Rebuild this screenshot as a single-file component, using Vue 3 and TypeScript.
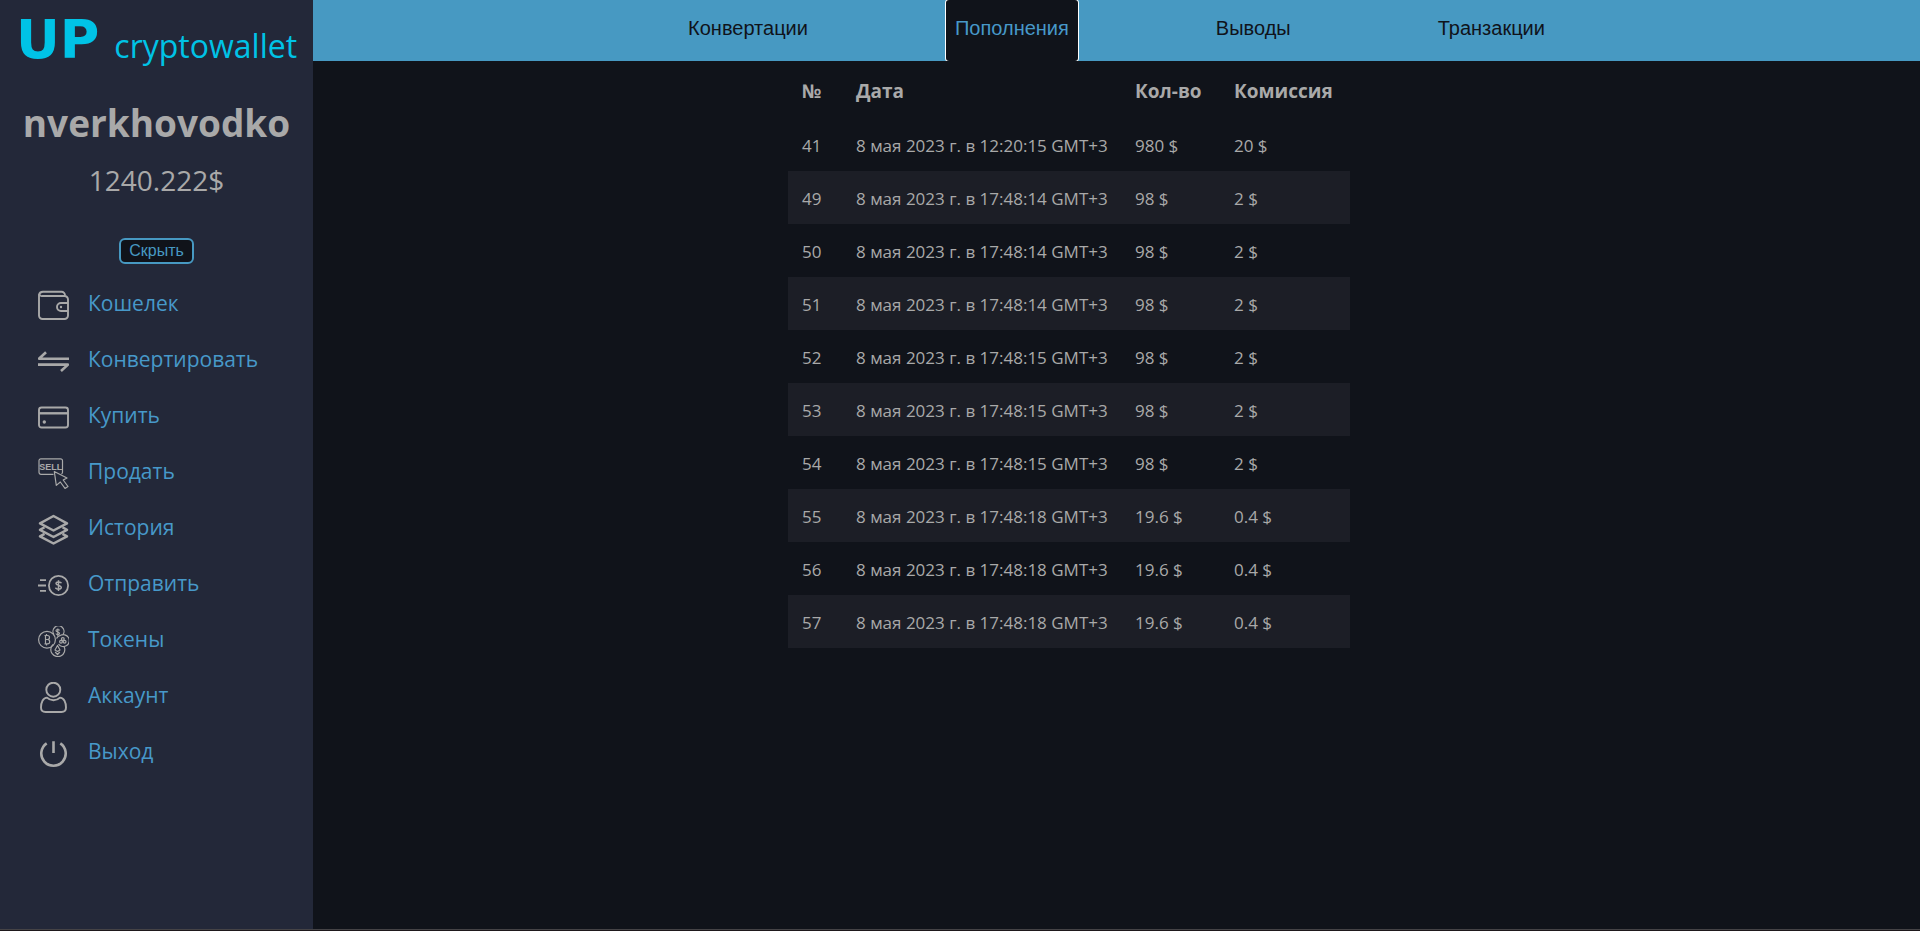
<script setup lang="ts">
import { ref } from 'vue'

interface Deposit {
  id: number
  date: string
  amount: string
  fee: string
}

const username = 'nverkhovodko'
const balance = '1240.222$'
const collapsed = ref(false)

const menu = [
  { icon: 'wallet', label: 'Кошелек' },
  { icon: 'convert', label: 'Конвертировать' },
  { icon: 'card', label: 'Купить' },
  { icon: 'sell', label: 'Продать' },
  { icon: 'layers', label: 'История' },
  { icon: 'send', label: 'Отправить' },
  { icon: 'tokens', label: 'Токены' },
  { icon: 'user', label: 'Аккаунт' },
  { icon: 'power', label: 'Выход' },
]

const tabs = ['Конвертации', 'Пополнения', 'Выводы', 'Транзакции']
const activeTab = ref('Пополнения')

const deposits: Deposit[] = [
  { id: 41, date: '8 мая 2023 г. в 12:20:15 GMT+3', amount: '980 $', fee: '20 $' },
  { id: 49, date: '8 мая 2023 г. в 17:48:14 GMT+3', amount: '98 $', fee: '2 $' },
  { id: 50, date: '8 мая 2023 г. в 17:48:14 GMT+3', amount: '98 $', fee: '2 $' },
  { id: 51, date: '8 мая 2023 г. в 17:48:14 GMT+3', amount: '98 $', fee: '2 $' },
  { id: 52, date: '8 мая 2023 г. в 17:48:15 GMT+3', amount: '98 $', fee: '2 $' },
  { id: 53, date: '8 мая 2023 г. в 17:48:15 GMT+3', amount: '98 $', fee: '2 $' },
  { id: 54, date: '8 мая 2023 г. в 17:48:15 GMT+3', amount: '98 $', fee: '2 $' },
  { id: 55, date: '8 мая 2023 г. в 17:48:18 GMT+3', amount: '19.6 $', fee: '0.4 $' },
  { id: 56, date: '8 мая 2023 г. в 17:48:18 GMT+3', amount: '19.6 $', fee: '0.4 $' },
  { id: 57, date: '8 мая 2023 г. в 17:48:18 GMT+3', amount: '19.6 $', fee: '0.4 $' },
]
</script>

<template>
  <div class="page">
    <aside class="sidebar">
      <a class="logo" href="#"><span class="logo-up">UP</span><span class="logo-name">cryptowallet</span></a>
      <h1 class="username">{{ username }}</h1>
      <p class="balance">{{ balance }}</p>
      <button class="toggle" type="button" @click="collapsed = !collapsed">Скрыть</button>

      <nav v-show="!collapsed" class="menu">
        <a v-for="item in menu" :key="item.icon" class="menu-link" href="#">
          <svg class="icon" viewBox="0 0 31 31" aria-hidden="true">
            <g v-if="item.icon === 'wallet'" stroke-width="1.9">
              <path d="M1 5.2A4 4 0 0 1 5 1.8H23.500a3.500 3.500 0 0 1 3.500 3.600" />
              <path d="M1 5v20.500A3.500 3.500 0 0 0 4.500 29H26.500A3.500 3.500 0 0 0 30 25.500V9.500A3.500 3.500 0 0 0 26.500 6H4.500A3 3 0 0 1 1 4" />
              <path d="M30 13H23a4 4 0 0 0 0 8h7" />
              <circle class="solid" cx="23" cy="17" r="1.200" />
            </g>
            <g v-else-if="item.icon === 'convert'" stroke-width="2.6">
              <path d="M8 6.200 1 12.700H31M23 25 30 18.600H0" />
            </g>
            <g v-else-if="item.icon === 'card'">
              <rect x="1" y="5.500" width="29" height="20" rx="2.500" stroke-width="1.9" />
              <path d="M1 11.300H30" stroke-width="2.400" />
              <circle class="solid" cx="6.300" cy="20" r="1.700" />
            </g>
            <g v-else-if="item.icon === 'sell'" stroke-width="1.2">
              <path d="M15.500 16.300H3A2 2 0 0 1 1 14.300V3A2 2 0 0 1 3 .8H22.500A2 2 0 0 1 24.500 3V14.300A2 2 0 0 1 23.500 16" />
              <text class="icon-text" x="12.700" y="11.800">SELL</text>
              <path d="M16.300 13.500 29 20 25.200 22 30 28.500 27 30.400 22.300 24 18.300 27.400Z" />
            </g>
            <g v-else-if="item.icon === 'layers'" stroke-width="2.5">
              <path d="M15.500 2 29 9.300 15.500 16.500 2 9.300Z" />
              <path d="M24.500 13.200 29 15.900 15.500 23 2 15.900 6.500 13.200" />
              <path d="M24.500 19.800 29 22.400 15.500 29.500 2 22.400 6.500 19.800" />
            </g>
            <g v-else-if="item.icon === 'send'" stroke-width="1.8">
              <circle cx="20.500" cy="15.500" r="9.600" />
              <path d="M2 10.200H8M0 15.500H8M2 20.800H8" />
              <path d="M23.400 13.200C23 11.600 18 11.200 18 13.600 18 15.800 23.300 15 23.300 17.500 23.300 19.800 18 19.600 17.600 17.600M20.500 10.200V21" stroke-width="1.500" />
            </g>
            <g v-else-if="item.icon === 'tokens'" stroke-width="1.2">
              <circle cx="9" cy="13.700" r="8.400" />
              <path d="M16 8.500A5.500 5.500 0 1 1 25 8.500M20.500 18.200A6 6 0 1 0 22.500 9.300 5.500 5.500 0 0 0 18.500 12.500" />
              <path d="M15 18.500A7 7 0 1 0 26.300 21" />
              <path d="M6.500 9.500H9.500a2 2 0 0 1 0 4H7.500M9.500 13.500a2.200 2.200 0 0 1 0 4.400H6.500M7.500 9.500V18M8.500 8V9.500M8.500 18V19.500" />
              <path d="M21.500 4.500C21 3 18 3.200 18 4.800 18 6.300 21.500 5.800 21.500 7.500 21.500 9 18.300 9 18 7.500M19.800 2.500V10" />
              <circle cx="24.800" cy="13" r="1.400" /><circle cx="23" cy="15.800" r="1.400" /><circle cx="26.600" cy="15.800" r="1.400" />
              <path d="M19.500 19.500 22 24 19.500 25.500 17 24ZM17.200 26 19.500 28.500 21.800 26" />
            </g>
            <g v-else-if="item.icon === 'user'" stroke-width="1.9">
              <circle cx="15.300" cy="7.700" r="7" />
              <path d="M9 15.600C5 15.600 3 20.500 3 25.500 3 28.800 4.300 30 7.500 30H23.500C26.700 30 28 28.800 28 25.500 28 20.500 26 15.600 22 15.600 20 17.600 17.500 18.200 15.500 18.200S11 17.600 9 15.600Z" />
            </g>
            <g v-else stroke-width="2.6">
              <path d="M8.700 5.400A12.200 12.200 0 1 0 22.300 5.400M15.500 3.200V15" />
            </g>
          </svg>
          <span>{{ item.label }}</span>
        </a>
      </nav>
    </aside>

    <main class="content">
      <nav class="tabs">
        <button
          v-for="tab in tabs"
          :key="tab"
          class="tab"
          :class="{ active: tab === activeTab }"
          type="button"
          @click="activeTab = tab"
        >{{ tab }}</button>
      </nav>

      <div class="table-area">
        <table class="deposits">
          <colgroup>
            <col class="col-id" /><col class="col-date" /><col class="col-amount" /><col class="col-fee" />
          </colgroup>
          <thead>
            <tr><th>№</th><th>Дата</th><th>Кол-во</th><th>Комиссия</th></tr>
          </thead>
          <tbody>
            <tr v-for="row in deposits" :key="row.id">
              <td>{{ row.id }}</td>
              <td>{{ row.date }}</td>
              <td>{{ row.amount }}</td>
              <td>{{ row.fee }}</td>
            </tr>
          </tbody>
        </table>
      </div>
    </main>
  </div>
</template>

<style>
body {
  margin: 0;
  background: #1e181b;
}
</style>

<style scoped>
.page {
  display: flex;
  box-sizing: border-box;
  min-height: calc(100vh - 1px);
  border-bottom: 1px solid #454346;
  color: #a9a9a9;
  background: #10131a;
  font-family: 'Open Sans', 'Noto Sans', sans-serif;
}

.sidebar {
  display: flex;
  flex: 0 0 313px;
  flex-direction: column;
  align-items: center;
  background: #232839;
}

.logo {
  display: flex;
  align-items: baseline;
  gap: 15px;
  height: 72px;
  color: #00c3e6;
  line-height: 80px;
  text-decoration: none;
}

.logo-up {
  font-family: 'DejaVu Sans', sans-serif;
  font-size: 54px;
  font-weight: 700;
}

.logo-name {
  font-size: 32px;
}

.username {
  margin: 24px 0 0;
  font-size: 37px;
  font-weight: 700;
  line-height: 54px;
}

.balance {
  margin: 10px 0 0;
  font-size: 28px;
  line-height: 40px;
}

.toggle {
  height: 26px;
  margin: 38px 0 0;
  padding: 0 8px;
  border: 2px solid #4799c2;
  border-radius: 6px;
  color: #4799c2;
  background: #10131a;
  font-family: 'Liberation Sans', Arial, sans-serif;
  font-size: 16px;
  line-height: 20px;
  cursor: pointer;
}

.menu {
  display: flex;
  flex-direction: column;
  align-self: stretch;
  margin-top: 13px;
  padding-left: 38px;
}

.menu-link {
  display: flex;
  align-items: center;
  gap: 19px;
  height: 56px;
  color: #4799c9;
  font-size: 21px;
  line-height: 32px;
  text-decoration: none;
}

.menu-link span {
  padding-bottom: 4px;
}

.icon {
  width: 31px;
  height: 31px;
  fill: none;
  stroke: #a9a9a9;
  stroke-linejoin: round;
}

.icon .solid {
  fill: #a9a9a9;
  stroke: none;
}

.icon-text {
  fill: #a9a9a9;
  stroke: none;
  font-family: 'Liberation Sans', Arial, sans-serif;
  font-size: 9px;
  font-weight: 700;
  text-anchor: middle;
}

.content {
  flex: 1;
  min-width: 0;
}

.tabs {
  display: flex;
  justify-content: center;
  gap: 129px;
  height: 61px;
  overflow: hidden;
  background: #4799c2;
}

.tab {
  padding: 0 9px 4px;
  border: 0;
  color: #10131a;
  background: transparent;
  font-family: 'Liberation Sans', Arial, sans-serif;
  font-size: 20px;
  cursor: pointer;
}

.tab.active {
  border-radius: 3px;
  color: #4799c9;
  background: #10131a;
  box-shadow: 0 0 0 1px #ffffff;
}

.table-area {
  display: flex;
  justify-content: center;
  padding: 4px 95px 0 0;
}

.deposits {
  border-collapse: collapse;
  font-size: 17px;
  line-height: 24px;
  text-align: left;
}

.deposits th,
.deposits td {
  box-sizing: border-box;
  height: 53px;
  padding: 2px 0 0 14px;
  white-space: nowrap;
}

.deposits th {
  padding: 0 0 2px 14px;
  font-size: 19px;
}

.deposits tbody tr:nth-child(even) {
  background: #1c1e26;
}

.col-id {
  width: 54px;
}

.col-date {
  width: 279px;
}

.col-amount {
  width: 99px;
}

.col-fee {
  width: 130px;
}
</style>
